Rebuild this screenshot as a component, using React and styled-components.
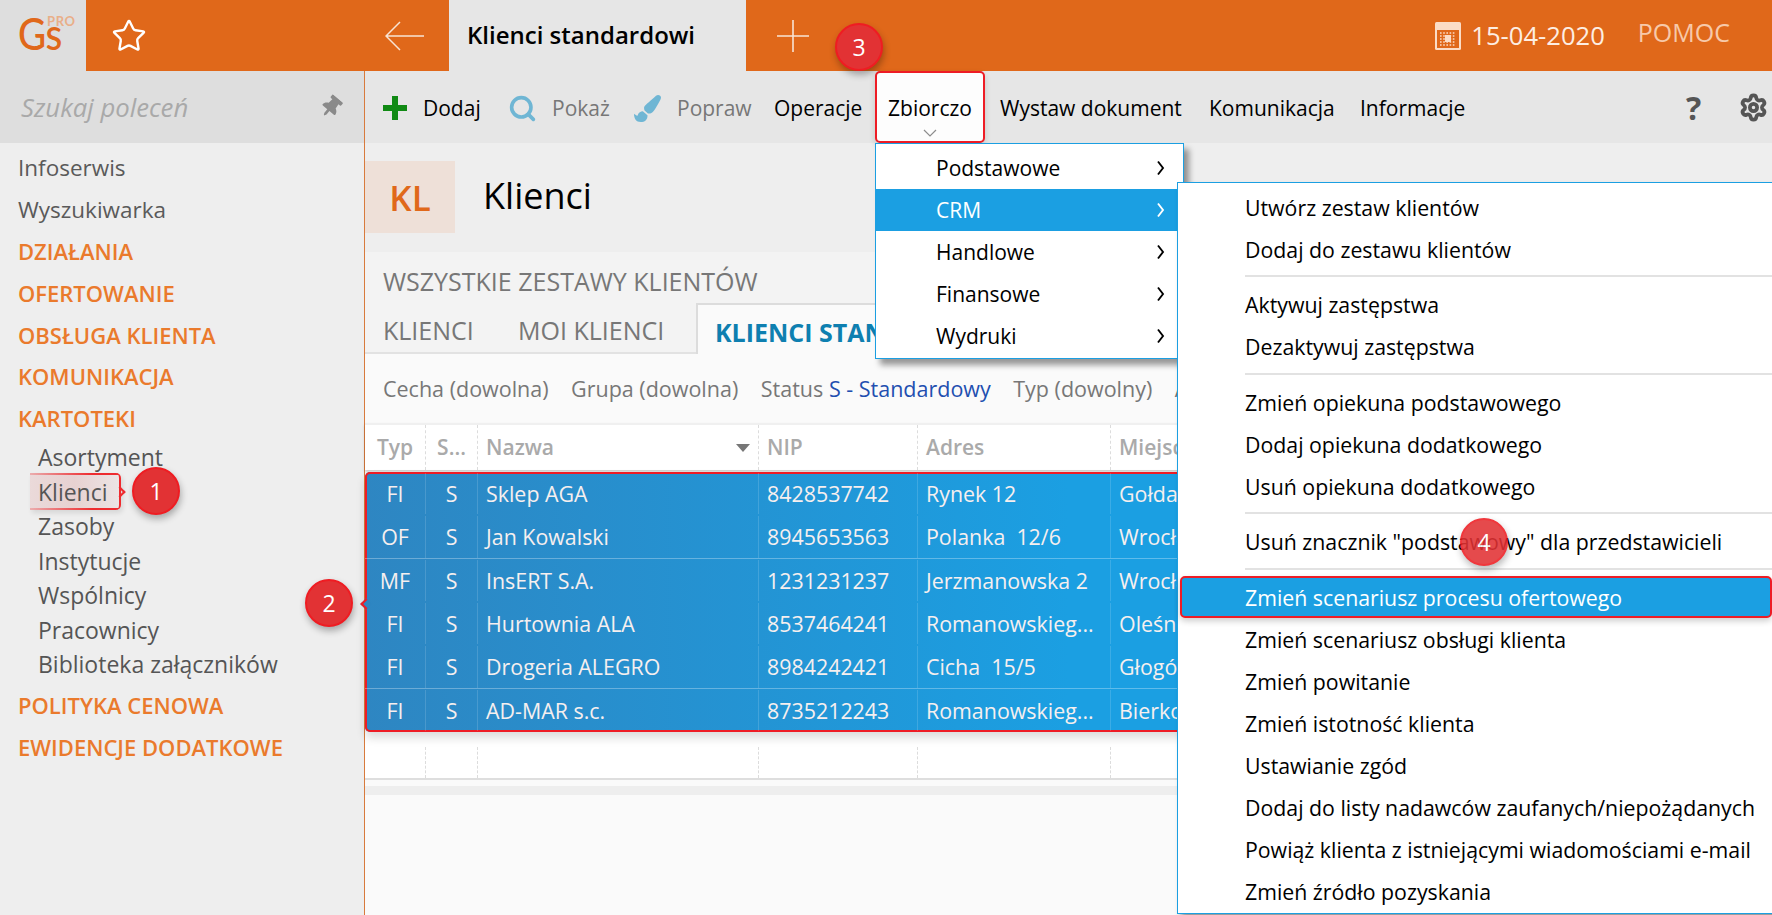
import React from 'react';
import styled, { createGlobalStyle } from 'styled-components';
import { Star, Search, Settings } from 'lucide-react';
import { FaPaintBrush, FaThumbtack } from 'react-icons/fa';

const GlobalStyle = createGlobalStyle`
  html, body {
    margin: 0;
    padding: 0;
    width: 100%;
    height: 915px;
    overflow: hidden;
    background: #fafafa;
    font-family: 'Open Sans', 'Noto Sans', sans-serif;
  }
  * { box-sizing: border-box; }
`;

const ORANGE = '#e0681a';
const BLUE = '#1b9fe2';

const columns = [61, 52, 281, 159, 193, 300];

const rows = [
  { typ: 'FI', nazwa: 'Sklep AGA', nip: '8428537742', adres: 'Rynek 12', miasto: 'Gołdap' },
  { typ: 'OF', nazwa: 'Jan Kowalski', nip: '8945653563', adres: 'Polanka  12/6', miasto: 'Wrocław', sep: true },
  { typ: 'MF', nazwa: 'InsERT S.A.', nip: '1231231237', adres: 'Jerzmanowska 2', miasto: 'Wrocław' },
  { typ: 'FI', nazwa: 'Hurtownia ALA', nip: '8537464241', adres: 'Romanowskieg...', miasto: 'Oleśnica' },
  { typ: 'FI', nazwa: 'Drogeria ALEGRO', nip: '8984242421', adres: 'Cicha  15/5', miasto: 'Głogów', sep: true },
  { typ: 'FI', nazwa: 'AD-MAR s.c.', nip: '8735212243', adres: 'Romanowskieg...', miasto: 'Bierkowice' },
];

const crmMenu = [
  ['Utwórz zestaw klientów', 'Dodaj do zestawu klientów'],
  ['Aktywuj zastępstwa', 'Dezaktywuj zastępstwa'],
  ['Zmień opiekuna podstawowego', 'Dodaj opiekuna dodatkowego', 'Usuń opiekuna dodatkowego'],
  ['Usuń znacznik "podstawowy" dla przedstawicieli'],
  [
    'Zmień scenariusz procesu ofertowego',
    'Zmień scenariusz obsługi klienta',
    'Zmień powitanie',
    'Zmień istotność klienta',
    'Ustawianie zgód',
    'Dodaj do listy nadawców zaufanych/niepożądanych',
    'Powiąż klienta z istniejącymi wiadomościami e-mail',
    'Zmień źródło pozyskania',
  ],
];

export default function App() {
  return (
    <Page>
      <GlobalStyle />
      <TopBar>
        <Logo>
          <LogoText>Gs</LogoText>
          <LogoPro>PRO</LogoPro>
        </Logo>
        <FavArea>
          <Star size={36} strokeWidth={1.6} color="#fff" />
          <svg width="40" height="30" viewBox="0 0 40 30" fill="none" stroke="#f8e3d4" strokeWidth="1.5">
            <path d="M39 15H1M15 1 1 15l14 14" />
          </svg>
        </FavArea>
        <ActiveTab>Klienci standardowi</ActiveTab>
        <AddTab>
          <svg width="32" height="32" viewBox="0 0 32 32" stroke="#f8e3d4" strokeWidth="1.6">
            <path d="M16 0v32M0 16h32" />
          </svg>
        </AddTab>
        <TopRight>
          <svg width="26" height="28" viewBox="0 0 26 28">
            <rect x="0" y="0" width="26" height="28" rx="1.5" fill="#fbdcc6" />
            <rect x="2" y="8" width="22" height="18" fill={ORANGE} />
            <path d="M5 11h16M5 14h16M5 17h16M5 20h16M5 23h16" stroke="#fbdcc6" strokeWidth="1.4" strokeDasharray="1.6 1.6" />
            <rect x="10" y="13" width="6" height="7" fill="#fbdcc6" />
          </svg>
          <DateText>15-04-2020</DateText>
          <HelpLink>POMOC</HelpLink>
        </TopRight>
      </TopBar>

      <Body>
        <Sidebar>
          <SearchBox>
            <SearchHint>Szukaj poleceń</SearchHint>
            <PinIcon size={22} color="#8a8a8a" />
          </SearchBox>
          <Nav>
            <NavItem>Infoserwis</NavItem>
            <NavItem>Wyszukiwarka</NavItem>
            <NavSection>DZIAŁANIA</NavSection>
            <NavSection>OFERTOWANIE</NavSection>
            <NavSection>OBSŁUGA KLIENTA</NavSection>
            <NavSection>KOMUNIKACJA</NavSection>
            <NavSection>KARTOTEKI</NavSection>
            <SubList>
              <SubItem>Asortyment</SubItem>
              <SubItem $marked><span>Klienci</span></SubItem>
              <SubItem>Zasoby</SubItem>
              <SubItem>Instytucje</SubItem>
              <SubItem>Wspólnicy</SubItem>
              <SubItem>Pracownicy</SubItem>
              <SubItem>Biblioteka załączników</SubItem>
            </SubList>
            <NavSection>POLITYKA CENOWA</NavSection>
            <NavSection>EWIDENCJE DODATKOWE</NavSection>
          </Nav>
        </Sidebar>

        <Main>
          <Toolbar>
            <ToolButton $iconGap={16} $w={126}>
              <svg width="24" height="24" viewBox="0 0 24 24" fill="#118a14">
                <path d="M9 0h6v9h9v6h-9v9H9v-9H0V9h9z" />
              </svg>
              Dodaj
            </ToolButton>
            <ToolButton $muted $iconGap={15} $w={125}>
              <SearchGlyph>
                <Search size={29} strokeWidth={3} color="#6fb6d4" />
              </SearchGlyph>
              Pokaż
            </ToolButton>
            <ToolButton $muted $iconGap={16} $w={140}>
              <FaPaintBrush size={27} color="#6fb6d4" />
              Popraw
            </ToolButton>
            <ToolButton $w={100}>Operacje</ToolButton>
            <OpenButton>
              Zbiorczo
              <svg width="14" height="8" viewBox="0 0 14 8" fill="none" stroke="#8d8d8d" strokeWidth="1.2">
                <path d="M1 1l6 6 6-6" />
              </svg>
            </OpenButton>
            <ToolButton $w={209} $first>Wystaw dokument</ToolButton>
            <ToolButton $w={151}>Komunikacja</ToolButton>
            <ToolButton>Informacje</ToolButton>
            <ToolIcons>
              <HelpMark>?</HelpMark>
              <Settings size={29} strokeWidth={3.1} color="#555" />
            </ToolIcons>
          </Toolbar>

          <TitleBar>
            <Badge>KL</Badge>
            <Title>Klienci</Title>
          </TitleBar>

          <Content>
            <SetsLabel>WSZYSTKIE ZESTAWY KLIENTÓW</SetsLabel>
            <Tabs>
              <TabLink $w={135}>KLIENCI</TabLink>
              <TabLink $w={178}>MOI KLIENCI</TabLink>
              <TabCurrent>KLIENCI STANDARDOWI</TabCurrent>
            </Tabs>
            <Filters>
              <span>Cecha (dowolna)</span>
              <span>Grupa (dowolna)</span>
              <span>Status <FilterValue>S - Standardowy</FilterValue></span>
              <span>Typ (dowolny)</span>
              <span>Aktywny</span>
            </Filters>
            <HeaderRow>
              <HeadCell $w={columns[0]} $center>Typ</HeadCell>
              <HeadCell $w={columns[1]} $center>S...</HeadCell>
              <HeadCell $w={columns[2]}>
                Nazwa
                <SortMark />
              </HeadCell>
              <HeadCell $w={columns[3]}>NIP</HeadCell>
              <HeadCell $w={columns[4]}>Adres</HeadCell>
              <HeadCell $w={columns[5]}>Miejscowość</HeadCell>
            </HeaderRow>
            <Selection>
              {rows.map((r) => (
                <Row key={r.nip} $sep={r.sep}>
                  <Cell $w={columns[0]} $center>{r.typ}</Cell>
                  <Cell $w={columns[1]} $center>S</Cell>
                  <Cell $w={columns[2]}>{r.nazwa}</Cell>
                  <Cell $w={columns[3]}>{r.nip}</Cell>
                  <Cell $w={columns[4]}>{r.adres}</Cell>
                  <Cell $w={columns[5]}>{r.miasto}</Cell>
                </Row>
              ))}
            </Selection>
            <EmptyRow>
              {columns.map((w) => (
                <EmptyCell key={w} $w={w} />
              ))}
            </EmptyRow>
            <ScrollTrack />
          </Content>
        </Main>
      </Body>

      <Menu>
        {['Podstawowe', 'CRM', 'Handlowe', 'Finansowe', 'Wydruki'].map((name) => (
          <MenuItem key={name} $active={name === 'CRM'}>
            {name}
            <svg width="9" height="16" viewBox="0 0 9 16" fill="none" stroke="currentColor" strokeWidth="1.9">
              <path d="M2 1.5 7 8l-5 6.500" />
            </svg>
          </MenuItem>
        ))}
      </Menu>

      <SubMenu>
        {crmMenu.map((group, i) => (
          <React.Fragment key={group[0]}>
            {i > 0 && <MenuSep />}
            {group.map((name) => (
              <SubMenuItem key={name} $marked={name === 'Zmień scenariusz procesu ofertowego'}>
                {name}
              </SubMenuItem>
            ))}
          </React.Fragment>
        ))}
      </SubMenu>

      <Step $x={156} $y={491}>1</Step>
      <Step $x={329} $y={603}>2</Step>
      <Step $x={859} $y={47}>3</Step>
      <Step $x={1484} $y={542} $faded>4</Step>
    </Page>
  );
}

const Page = styled.div`
  position: relative;
  width: 1772px;
  height: 915px;
  overflow: hidden;
  font-size: 21px;
`;

const TopBar = styled.div`
  display: flex;
  height: 71px;
  background: ${ORANGE};
`;

const Logo = styled.div`
  position: relative;
  width: 86px;
  background: #dedede;
  padding: 9px 0 0 18px;
`;

const LogoText = styled.span`
  display: inline-block;
  font-family: 'Lato', sans-serif;
  font-size: 45px;
  line-height: 48px;
  font-weight: 500;
  letter-spacing: -0.5px;
  color: ${ORANGE};
  transform: scaleX(0.86);
  transform-origin: left center;
`;

const LogoPro = styled.span`
  position: absolute;
  left: 47px;
  top: 15px;
  font-family: 'Lato', sans-serif;
  font-size: 13px;
  line-height: 13px;
  font-weight: 700;
  letter-spacing: 0.6px;
  color: #e9ae88;
`;

const FavArea = styled.div`
  width: 363px;
  display: flex;
  align-items: center;
  justify-content: space-between;
  padding: 0 24px 0 25px;
`;

const ActiveTab = styled.div`
  width: 297px;
  padding: 0 0 2px 18px;
  display: flex;
  align-items: center;
  background: #e6e6e6;
  color: #000;
  font-size: 24px;
  font-weight: 600;
`;

const AddTab = styled.div`
  width: 100px;
  padding-left: 31px;
  display: flex;
  align-items: center;
`;

const TopRight = styled.div`
  margin-left: auto;
  padding-right: 42px;
  display: flex;
  align-items: center;
`;

const DateText = styled.span`
  margin-left: 10px;
  font-size: 25.6px;
  color: #fdeee3;
`;

const HelpLink = styled.span`
  margin: -8px 0 0 33px;
  font-size: 25px;
  color: #f7c9a9;
`;

const Body = styled.div`
  display: flex;
  height: 844px;
`;

const Sidebar = styled.div`
  width: 365px;
  flex: none;
  background: #eeeeee;
  border-right: 1px solid #d87a3c;
`;

const SearchBox = styled.div`
  height: 72px;
  padding: 0 22px 0 21px;
  display: flex;
  align-items: center;
  justify-content: space-between;
  background: #dedede;
`;

const SearchHint = styled.span`
  font-size: 25.7px;
  font-style: italic;
  color: #a9a9a9;
`;

const PinIcon = styled(FaThumbtack)`
  transform: rotate(40deg);
`;

const Nav = styled.div`
  padding-top: 4px;
`;

const NavItem = styled.div`
  height: 41.7px;
  padding-left: 18px;
  display: flex;
  align-items: center;
  font-size: 22.5px;
  color: #5a5a5a;
`;

const NavSection = styled(NavItem)`
  color: #ea7a2c;
  font-size: 22px;
  font-weight: 600;
`;

const SubList = styled.div`
  margin: 1px 0 3px;
`;

const SubItem = styled.div`
  position: relative;
  height: 34.5px;
  padding-left: 38px;
  display: flex;
  align-items: center;
  font-size: 23px;
  color: #555;

  span {
    position: relative;
  }

  ${(p) =>
    p.$marked &&
    `
    &::before {
      content: '';
      position: absolute;
      left: 30px;
      top: -1px;
      width: 89px;
      height: 37px;
      border-right: 2px solid #ee2b2f;
      border-radius: 0 5px 5px 0;
      background:
        linear-gradient(90deg, rgba(238, 43, 47, 0.25), #ee2b2f 70%) top / 100% 2px no-repeat,
        linear-gradient(90deg, rgba(238, 43, 47, 0.25), #ee2b2f 70%) bottom / 100% 2px no-repeat,
        linear-gradient(90deg, rgba(226, 170, 170, 0.3), rgba(226, 190, 190, 0.6) 50%, rgba(226, 190, 190, 0.2));
      box-shadow: 2px 3px 5px rgba(0, 0, 0, 0.1);
    }
    &::after {
      content: '';
      position: absolute;
      left: 116px;
      top: 14px;
      width: 6px;
      height: 6px;
      border-top: 2px solid #ee2b2f;
      border-right: 2px solid #ee2b2f;
      transform: rotate(45deg);
    }
  `}
`;

const Main = styled.div`
  flex: 1;
  min-width: 0;
  display: flex;
  flex-direction: column;
`;

const Toolbar = styled.div`
  height: 72px;
  padding-left: 18px;
  display: flex;
  align-items: center;
  background: #e6e6e6;
`;

const ToolButton = styled.div`
  display: flex;
  align-items: center;
  gap: ${(p) => p.$iconGap || 0}px;
  width: ${(p) => (p.$w ? `${p.$w}px` : 'auto')};
  margin-left: ${(p) => (p.$first ? '15px' : '0')};
  padding-top: 2px;
  color: ${(p) => (p.$muted ? '#777' : '#000')};
`;

const SearchGlyph = styled.span`
  display: flex;
  margin-left: -1px;
`;

const OpenButton = styled.div`
  position: relative;
  width: 110px;
  height: 72px;
  margin-left: 1px;
  padding-top: 2px;
  display: flex;
  align-items: center;
  justify-content: center;
  background: #fdfdfd;
  color: #000;
  border: 2px solid #ee1c25;
  border-radius: 5px;
  box-shadow: 0 3px 6px rgba(0, 0, 0, 0.15);

  svg {
    position: absolute;
    left: 46px;
    bottom: 4px;
  }
`;

const ToolIcons = styled.div`
  margin-left: auto;
  padding-right: 4px;
  width: 86px;
  display: flex;
  align-items: center;
  justify-content: space-between;
`;

const HelpMark = styled.span`
  font-size: 32px;
  font-weight: 700;
  color: #555;
`;

const TitleBar = styled.div`
  height: 109px;
  padding-top: 18px;
  display: flex;
  align-items: flex-start;
  background: #eeeeee;
`;

const Badge = styled.div`
  width: 90px;
  height: 72px;
  display: flex;
  align-items: center;
  justify-content: center;
  background: #eee0d8;
  color: ${ORANGE};
  font-size: 35px;
  font-weight: 600;
`;

const Title = styled.div`
  margin-left: 28px;
  height: 68px;
  display: flex;
  align-items: center;
  font-size: 36px;
  color: #000;
`;

const Content = styled.div`
  flex: 1;
  background: #fafafa;
`;

const SetsLabel = styled.div`
  height: 51px;
  padding: 6px 0 0 18px;
  display: flex;
  align-items: center;
  background: #f3f3f3;
  color: #777;
  font-size: 25px;
`;

const Tabs = styled.div`
  height: 51px;
  padding-left: 18px;
  display: flex;
  align-items: stretch;
  background: #f3f3f3;
  border-bottom: 2px solid #e2e2e2;
  font-size: 25px;
`;

const TabLink = styled.div`
  width: ${(p) => p.$w}px;
  padding-top: 5px;
  display: flex;
  align-items: center;
  color: #777;
`;

const TabCurrent = styled.div`
  flex: 1;
  margin-bottom: -2px;
  padding: 5px 0 0 17px;
  display: flex;
  align-items: center;
  background: #fafafa;
  border-top: 2px solid #dcdcdc;
  border-left: 2px solid #dcdcdc;
  color: #0e7fb0;
  font-weight: 700;
`;

const Filters = styled.div`
  height: 69px;
  padding: 0 0 1px 18px;
  display: flex;
  align-items: center;
  gap: 22.5px;
  color: #777;
  font-size: 21.5px;
`;

const FilterValue = styled.span`
  color: #1f4fb0;
`;

const HeaderRow = styled.div`
  height: 47px;
  display: flex;
  background: #fff;
  border-top: 2px solid #f0f0f0;
  box-shadow: 0 2px 3px rgba(0, 0, 0, 0.2);
  position: relative;
`;

const HeadCell = styled.div`
  position: relative;
  width: ${(p) => p.$w}px;
  flex: none;
  padding-bottom: 2px;
  display: flex;
  align-items: center;
  justify-content: ${(p) => (p.$center ? 'center' : 'flex-start')};
  padding-left: ${(p) => (p.$center ? '0' : '8px')};
  border-right: 1px dashed #dcdcdc;
  color: #aaa;
  font-size: 21px;
  font-weight: 600;
`;

const SortMark = styled.span`
  position: absolute;
  right: 8px;
  top: 19px;
  border-left: 7px solid transparent;
  border-right: 7px solid transparent;
  border-top: 8px solid #777;
`;

const Selection = styled.div`
  position: relative;
  margin-top: 2px;
  height: 260px;
  border-radius: 5px;
  background: linear-gradient(90deg, #2e86c2, ${BLUE} 50%);
  box-shadow: inset 0 0 0 2px #ee1c25, 0 6px 10px rgba(0, 0, 0, 0.14);

  &::before {
    content: '';
    position: absolute;
    left: -3px;
    top: 128px;
    width: 6px;
    height: 6px;
    background: #2e86c2;
    border-left: 2px solid #ee1c25;
    border-bottom: 2px solid #ee1c25;
    transform: rotate(45deg);
  }
`;

const Row = styled.div`
  height: 43.33px;
  padding-top: 1px;
  display: flex;
  border-bottom: 1px solid ${(p) => (p.$sep ? 'rgba(255, 255, 255, 0.3)' : 'transparent')};
`;

const Cell = styled.div`
  width: ${(p) => p.$w}px;
  flex: none;
  display: flex;
  align-items: center;
  justify-content: ${(p) => (p.$center ? 'center' : 'flex-start')};
  padding-left: ${(p) => (p.$center ? '0' : '8px')};
  border-right: 1px solid rgba(255, 255, 255, 0.14);
  color: #f6efef;
  font-size: 21.4px;
  white-space: pre;
`;

const EmptyRow = styled.div`
  height: 48px;
  padding-top: 15px;
  display: flex;
  background: #fff;
  border-bottom: 2px solid #dedede;
`;

const EmptyCell = styled.div`
  width: ${(p) => p.$w}px;
  flex: none;
  border-right: 1px dashed #dcdcdc;
`;

const ScrollTrack = styled.div`
  height: 9px;
  margin-top: 6px;
  background: #eeeeee;
`;

const Menu = styled.div`
  position: absolute;
  left: 875px;
  top: 143px;
  width: 309px;
  height: 216px;
  padding-top: 3px;
  background: #fff;
  border: 1px solid ${BLUE};
  box-shadow: 5px 6px 6px rgba(0, 0, 0, 0.4);
  z-index: 3;
`;

const MenuItem = styled.div`
  height: 42px;
  padding: 0 18px 0 60px;
  display: flex;
  align-items: center;
  justify-content: space-between;
  background: ${(p) => (p.$active ? BLUE : 'transparent')};
  color: ${(p) => (p.$active ? '#fff' : '#000')};
`;

const SubMenu = styled.div`
  position: absolute;
  left: 1177px;
  top: 182px;
  width: 640px;
  height: 732px;
  padding-top: 3px;
  background: #fff;
  border: 1px solid ${BLUE};
  box-shadow: 4px 5px 6px rgba(0, 0, 0, 0.4);
  font-size: 21.3px;
  z-index: 4;
`;

const SubMenuItem = styled.div`
  height: 42px;
  padding-left: 67px;
  display: flex;
  align-items: center;
  color: ${(p) => (p.$marked ? '#fff' : '#000')};
  ${(p) =>
    p.$marked &&
    `
    margin-left: 2px;
    width: 592px;
    padding-left: 63px;
    background: ${BLUE};
    border: 2px solid #ee1c25;
    border-radius: 5px;
    box-shadow: 0 3px 6px rgba(0, 0, 0, 0.2);
  `}
`;

const MenuSep = styled.div`
  height: 2px;
  margin: 5px 0 6.5px 67px;
  background: #e2e2e2;
`;

const Step = styled.div`
  position: absolute;
  left: ${(p) => p.$x - 24}px;
  top: ${(p) => p.$y - 24}px;
  width: 48px;
  height: 48px;
  display: flex;
  align-items: center;
  justify-content: center;
  border-radius: 50%;
  background: #e23234;
  border: 2px solid #ef1c22;
  box-shadow: 1px 4px 7px rgba(0, 0, 0, 0.3);
  color: #fff;
  font-size: 23px;
  opacity: ${(p) => (p.$faded ? 0.88 : 1)};
  z-index: 5;
`;
